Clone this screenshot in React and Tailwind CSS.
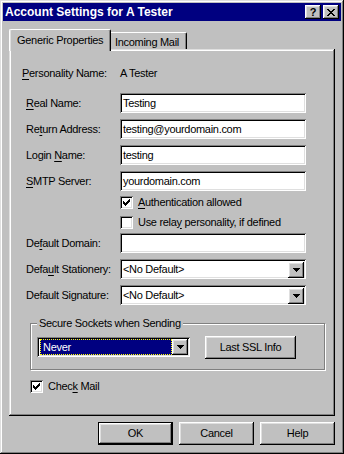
import React from "react";

const raised =
  "shadow-[inset_-1px_-1px_#000,inset_1px_1px_#fff,inset_-2px_-2px_#808080,inset_2px_2px_#dfdfdf]";
const frame =
  "shadow-[inset_-1px_-1px_#000,inset_1px_1px_#dfdfdf,inset_-2px_-2px_#808080,inset_2px_2px_#fff]";
const sunken =
  "shadow-[inset_1px_1px_#808080,inset_-1px_-1px_#fff,inset_2px_2px_#000,inset_-2px_-2px_#dfdfdf]";

// pixel pattern drawing helper
function Pixels({ rows, className }) {
  const w = rows[0].length;
  const h = rows.length;
  return (
    <svg width={w} height={h} viewBox={`0 0 ${w} ${h}`} className={className} shapeRendering="crispEdges">
      {rows.map((r, y) =>
        r.split("").map((c, x) => (c === "X" ? <rect key={`${x}-${y}`} x={x} y={y} width="1" height="1" fill="#000" /> : null))
      )}
    </svg>
  );
}

const checkRows = ["......X", ".....XX", "X...XXX", "XX.XXX.", "XXXXX..", ".XXX...", "..X...."];
const closeRows = ["XX....XX", ".XX..XX.", "..XXXX..", "...XX...", "..XXXX..", ".XX..XX.", "XX....XX"];
const arrowRows = ["XXXXXXX", ".XXXXX.", "..XXX..", "...X..."];

function U({ children }) {
  return <span className="underline underline-offset-[2px]">{children}</span>;
}

function TextField({ value }) {
  return (
    <div className={`w-[186px] h-[20px] bg-white ${sunken} flex items-center pl-[3px] pt-[1px]`}>
      {value}
    </div>
  );
}

function ArrowBtn() {
  return (
    <div className={`w-[16px] h-[16px] bg-[#c0c0c0] ${raised} flex items-center justify-center`}>
      <Pixels rows={arrowRows} />
    </div>
  );
}

function Combo({ value }) {
  return (
    <div className={`w-[186px] h-[20px] bg-white ${sunken} flex items-center pl-[3px] pr-[2px] pt-[1px]`}>
      <span className="flex-1">{value}</span>
      <ArrowBtn />
    </div>
  );
}

function CheckBox({ checked }) {
  return (
    <div className={`w-[13px] h-[13px] bg-white ${sunken} flex items-center justify-center shrink-0`}>
      {checked && <Pixels rows={checkRows} />}
    </div>
  );
}

function Row({ label, children, mt }) {
  return (
    <div className={`flex items-center h-[20px] pl-[17px] ${mt}`}>
      <div className="w-[94px]">{label}</div>
      {children}
    </div>
  );
}

export default function App() {
  return (
    <div
      className={`w-[344px] h-[454px] bg-[#c0c0c0] p-[3px] ${frame} flex flex-col font-['Liberation_Sans',Arial,sans-serif] text-[11px] leading-[13px] tracking-[-0.3px] text-black select-none`}
    >
      {/* title bar */}
      <div className="h-[18px] bg-[#000080] flex items-center pl-[2px] pr-[2px]">
        <span className="flex-1 text-white font-bold text-[12px] tracking-normal">Account Settings for A Tester</span>
        <div className={`w-[16px] h-[14px] bg-[#c0c0c0] ${raised} flex items-center justify-center font-bold text-[11px] leading-none`}>
          ?
        </div>
        <div className={`w-[16px] h-[14px] ml-[2px] bg-[#c0c0c0] ${raised} flex items-center justify-center`}>
          <Pixels rows={closeRows} />
        </div>
      </div>

      {/* tabs */}
      <div className="mt-[8px] mx-[6px] flex items-end h-[20px]">
        <div className="relative z-10 h-[22px] mb-[-2px] w-[102px] bg-[#c0c0c0] border-l border-t border-white rounded-tl-[2px] rounded-tr-[2px] border-r border-r-black shadow-[inset_-1px_0_#808080,inset_1px_0_#dfdfdf] pl-[7px] pt-[4px]">
          Generic Properties
        </div>
        <div className="h-[17px] w-[76px] bg-[#c0c0c0] border-t border-white rounded-tr-[2px] border-r border-r-black shadow-[inset_-1px_0_#808080] pl-[4px] pt-[3px]">
          Incoming Mail
        </div>
      </div>

      {/* tab page */}
      <div className={`mx-[6px] h-[367px] bg-[#c0c0c0] ${frame} flex flex-col`}>
        <div className="flex items-center h-[20px] mt-[14px] pl-[13px]">
          <div className="w-[98px]">
            <U>P</U>ersonality Name:
          </div>
          <span>A Tester</span>
        </div>
        <Row mt="mt-[10px]" label={<><U>R</U>eal Name:</>}>
          <TextField value="Testing" />
        </Row>
        <Row mt="mt-[6px]" label={<>Re<U>t</U>urn Address:</>}>
          <TextField value="testing@yourdomain.com" />
        </Row>
        <Row mt="mt-[6px]" label={<>Login <U>N</U>ame:</>}>
          <TextField value="testing" />
        </Row>
        <Row mt="mt-[6px]" label={<><U>S</U>MTP Server:</>}>
          <TextField value="yourdomain.com" />
        </Row>
        <div className="flex items-center h-[20px] mt-[1px] pl-[111px] gap-[5px]">
          <CheckBox checked />
          <span>
            <U>A</U>uthentication allowed
          </span>
        </div>
        <div className="flex items-center h-[20px] pl-[111px] gap-[5px]">
          <CheckBox />
          <span>
            Use rela<U>y</U> personality, if defined
          </span>
        </div>
        <Row mt="mt-[1px]" label={<>De<U>f</U>ault Domain:</>}>
          <TextField value="" />
        </Row>
        <Row mt="mt-[6px]" label={<>Defa<U>u</U>lt Stationery:</>}>
          <Combo value="<No Default>" />
        </Row>
        <Row mt="mt-[6px]" label={<>Default Signature:</>}>
          <Combo value="<No Default>" />
        </Row>

        {/* group box */}
        <div className="relative mt-[18px] ml-[21px] w-[295px] h-[47px] border border-[#808080] shadow-[inset_1px_1px_#fff,1px_1px_#fff] flex items-center pl-[6px] pt-[1px]">
          <span className="absolute left-[6px] top-[-7px] bg-[#c0c0c0] px-[2px]">Secure Sockets when Sending</span>
          <div className={`w-[153px] h-[20px] bg-white ${sunken} flex items-center p-[2px]`}>
            <div className="flex-1 h-full flex items-center pl-[1px]">
              <div className="flex-1 h-full bg-[#000080] border border-dotted border-[#ffff00] text-white flex items-center pl-[2px]">
                Never
              </div>
            </div>
            <ArrowBtn />
          </div>
          <div className={`ml-[15px] w-[91px] h-[23px] bg-[#c0c0c0] ${raised} flex items-center justify-center`}>
            Last SSL Info
          </div>
        </div>

        <div className="flex items-center h-[13px] mt-[10px] pl-[21px] gap-[5px]">
          <CheckBox checked />
          <span>
            Chec<U>k</U> Mail
          </span>
        </div>
      </div>

      {/* buttons */}
      <div className="mt-[6px] flex justify-end gap-[6px] pr-[6px]">
        <div className="w-[75px] h-[23px] border border-black bg-[#c0c0c0]">
          <div className={`w-full h-full ${raised} flex items-center justify-center`}>OK</div>
        </div>
        <div className={`w-[75px] h-[23px] bg-[#c0c0c0] ${raised} flex items-center justify-center`}>Cancel</div>
        <div className={`w-[75px] h-[23px] bg-[#c0c0c0] ${raised} flex items-center justify-center`}>Help</div>
      </div>
    </div>
  );
}
